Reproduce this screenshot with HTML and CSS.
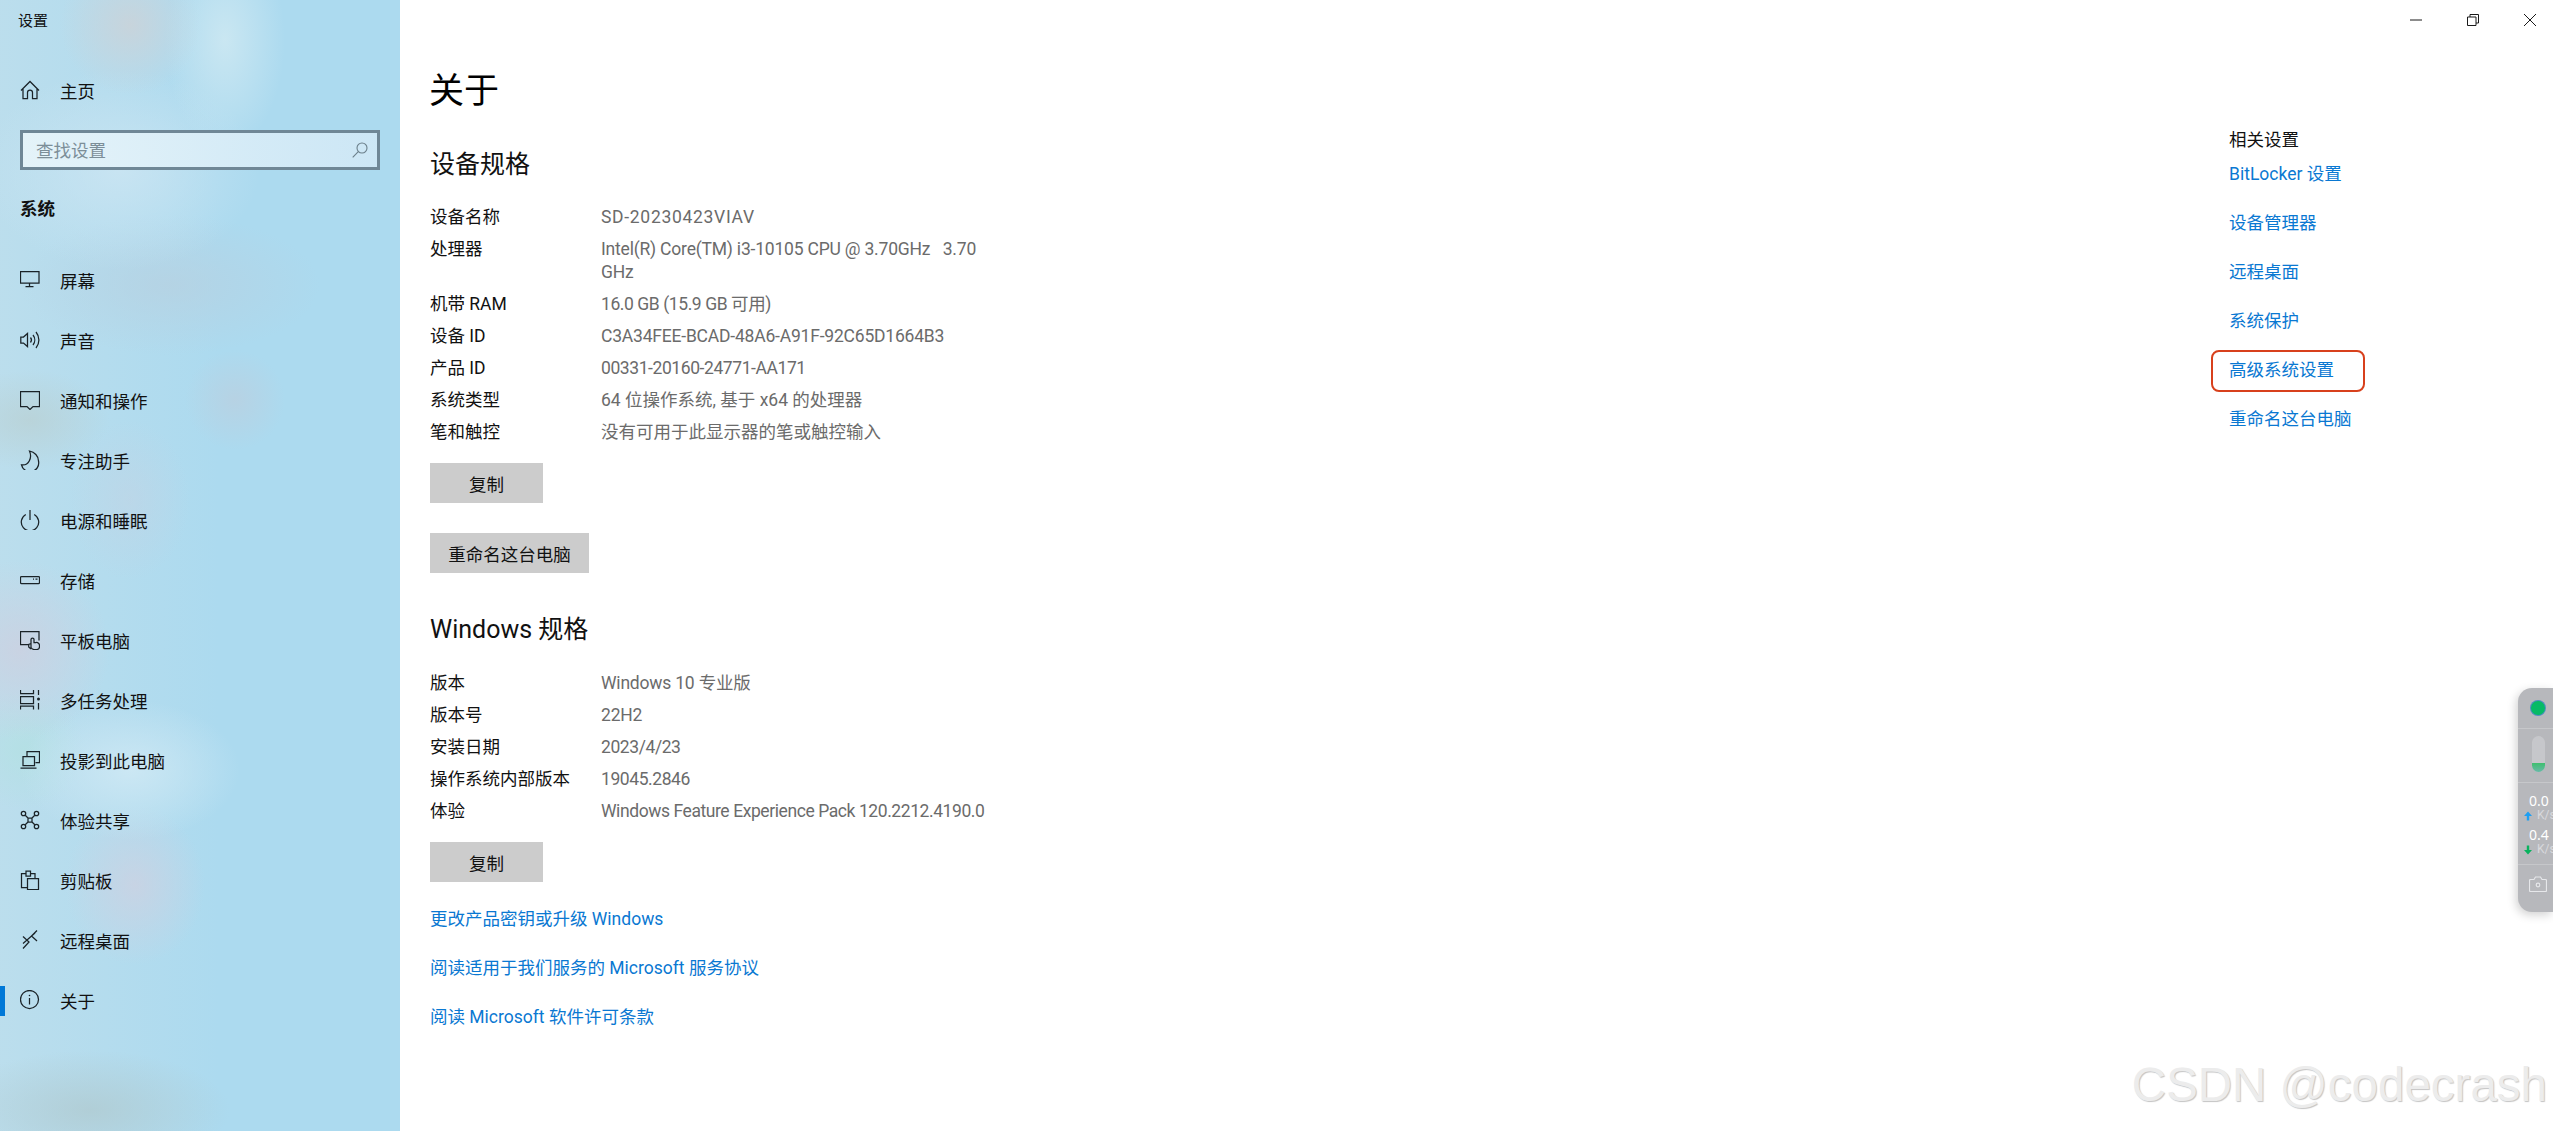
FILE: index.html
```html
<!DOCTYPE html>
<html lang="zh-CN">
<head>
<meta charset="utf-8">
<title>设置</title>
<link rel="stylesheet" href="styles.css">
</head>
<body>
<div class="app">
  <aside class="sidebar">
    <div class="app-title">设置</div>
    <a class="nav-item"><svg class="ico" viewBox="0 0 20 20"><path d="M1 10.500 10 1.500l9 9M3 8.500V18.500h4.500v-6a2.500 2.500 0 0 1 5 0v6H17V8.500"/></svg><span>主页</span></a>
    <div class="search"><span class="search-text">查找设置</span><svg class="search-ico" viewBox="0 0 16 16"><circle cx="10" cy="6" r="5"/><path d="M6.300 9.700.7 15.300"/></svg></div>
    <div class="group">系统</div>
    <nav class="nav">
      <a class="nav-item"><svg class="ico" viewBox="0 0 20 20"><path d="M.5 1.500h18.500v11.500H.5zM9.500 13v3M5.500 16.500h8"/></svg><span>屏幕</span></a>
      <a class="nav-item"><svg class="ico" viewBox="0 0 20 20"><path d="M.8 7h2.700L7.500 3.500v13L3.500 13H.8zM10.500 7.500a4 4 0 0 1 0 5M13 5a8 8 0 0 1 0 10M16 2a12.500 12.500 0 0 1 0 16"/></svg><span>声音</span></a>
      <a class="nav-item"><svg class="ico" viewBox="0 0 20 20"><path d="M.5 1.500h19v15H13L10 19.500 7 16.500H.5z"/></svg><span>通知和操作</span></a>
      <a class="nav-item"><svg class="ico" viewBox="0 0 20 20"><path d="M9.500 1C14.500 2 18.500 6 18.500 11a8.500 8.500 0 0 1-17 3.800C8.500 16 12.500 8 9.500 1z"/></svg><span>专注助手</span></a>
      <a class="nav-item"><svg class="ico" viewBox="0 0 20 20"><path d="M10 0v10M5.800 4.500a8.700 8.700 0 1 0 8.400 0"/></svg><span>电源和睡眠</span></a>
      <a class="nav-item"><svg class="ico" viewBox="0 0 20 20"><rect x=".5" y="6.500" width="19" height="7" rx="1"/><path d="M13 9.200h1M15.500 9.200h2"/></svg><span>存储</span></a>
      <a class="nav-item"><svg class="ico" viewBox="0 0 20 20"><path d="M8.500 14.500H.5v-13h18.500v9M11 17.500V9.500a1.500 1.500 0 0 1 3 0v3h2a3 3 0 0 1 3.500 3v1.500a2.800 2.800 0 0 1-2.800 2.500h-2.700A4 4 0 0 1 11 17.500zM11 13.500l-2.300 1v2.500l2.300 2"/></svg><span>平板电脑</span></a>
      <a class="nav-item"><svg class="ico" viewBox="0 0 20 20"><path d="M.5 0v3.500h13V0M.5 6.500h13v7H.5zM.5 19.500V16h13v3.500M18.500 0v5M18.500 13v6.500"/><circle class="solid" cx="18.500" cy="9" r="1.500"/></svg><span>多任务处理</span></a>
      <a class="nav-item"><svg class="ico" viewBox="0 0 20 20"><path d="M7 6V1.500h12.500v11H15.500M3 6.500h11.500v9H3zM.5 18h16"/></svg><span>投影到此电脑</span></a>
      <a class="nav-item"><svg class="ico" viewBox="0 0 20 20"><circle cx="3.500" cy="3.500" r="2.200"/><circle cx="16.500" cy="3.500" r="2.200"/><circle cx="3.500" cy="16.500" r="2.200"/><circle cx="16.500" cy="16.500" r="2.200"/><path d="M5.200 5.200 8 8m6.800-2.800L12 8M5.200 14.800 8 12m6.800 2.800L12 12M8 8h4v4H8z"/></svg><span>体验共享</span></a>
      <a class="nav-item"><svg class="ico" viewBox="0 0 20 20"><path d="M7 17.500H1.500v-14H6V1h4.500v2.500H15V8M7.500 8.500h11v11h-11zM6 3.500V6h4.500V3.500"/></svg><span>剪贴板</span></a>
      <a class="nav-item"><svg class="ico" viewBox="0 0 20 20"><path d="M3 6.500 9 12l-6 6.500M17 .5l-5.500 5.500 5.500 5M3 13.500 15 3"/></svg><span>远程桌面</span></a>
      <a class="nav-item active"><svg class="ico" viewBox="0 0 20 20"><circle cx="9.500" cy="9.500" r="9"/><path d="M9.500 8v6.500"/><circle class="solid" cx="9.500" cy="5.500" r=".8"/></svg><span>关于</span></a>
    </nav>
  </aside>

  <main class="main">
    <div class="win-controls">
      <svg class="win-btn" viewBox="0 0 12 12"><path d="M0 6h12"/></svg>
      <svg class="win-btn" viewBox="0 0 12 12"><path d="M.5 3h8.500v8.500H.5zM3 3V.5h8.500V9H9"/></svg>
      <svg class="win-btn" viewBox="0 0 12 12"><path d="M0 0l12 12M12 0 0 12"/></svg>
    </div>
    <section class="content">
      <h1 class="page-title">关于</h1>
      <h2 class="section-title">设备规格</h2>
      <dl class="spec">
        <dt>设备名称</dt><dd class="wide">SD-20230423VIAV</dd>
        <dt>处理器</dt><dd class="latin">Intel(R) Core(TM) i3-10105 CPU @ 3.70GHz&nbsp;&nbsp;&nbsp;3.70 GHz</dd>
        <dt>机带 RAM</dt><dd class="digits">16.0 GB (15.9 GB 可用)</dd>
        <dt>设备 ID</dt><dd class="latin">C3A34FEE-BCAD-48A6-A91F-92C65D1664B3</dd>
        <dt>产品 ID</dt><dd class="digits">00331-20160-24771-AA171</dd>
        <dt>系统类型</dt><dd>64 位操作系统, 基于 x64 的处理器</dd>
        <dt>笔和触控</dt><dd>没有可用于此显示器的笔或触控输入</dd>
      </dl>
      <button class="btn btn-copy">复制</button>
      <button class="btn btn-rename">重命名这台电脑</button>
      <h2 class="section-title second">Windows 规格</h2>
      <dl class="spec spec-win">
        <dt>版本</dt><dd class="latin">Windows 10 专业版</dd>
        <dt>版本号</dt><dd class="latin">22H2</dd>
        <dt>安装日期</dt><dd class="digits">2023/4/23</dd>
        <dt>操作系统内部版本</dt><dd class="digits">19045.2846</dd>
        <dt>体验</dt><dd class="digits">Windows Feature Experience Pack 120.2212.4190.0</dd>
      </dl>
      <button class="btn btn-copy">复制</button>
      <div class="links">
        <a class="link">更改产品密钥或升级 Windows</a>
        <a class="link">阅读适用于我们服务的 Microsoft 服务协议</a>
        <a class="link">阅读 Microsoft 软件许可条款</a>
      </div>
    </section>
    <aside class="related">
      <div class="related-title">相关设置</div>
      <a class="link">BitLocker 设置</a>
      <a class="link">设备管理器</a>
      <a class="link">远程桌面</a>
      <a class="link">系统保护</a>
      <a class="link marked">高级系统设置</a>
      <a class="link">重命名这台电脑</a>
    </aside>
  </main>
</div>

<div class="widget">
  <div class="w-top"><span class="w-dot"></span></div>
  <div class="w-mem"><span class="w-capsule"><span class="w-fill"></span></span></div>
  <div class="w-net">
    <div class="w-val">0.0</div>
    <div class="w-rate"><svg class="w-arrow" viewBox="0 0 8 9"><path class="up" d="M4 0 8 4.500H5.200V9H2.800V4.500H0z"/></svg>K/s</div>
    <div class="w-val w-val2">0.4</div>
    <div class="w-rate"><svg class="w-arrow" viewBox="0 0 8 9"><path class="down" d="M4 9 8 4.500H5.200V0H2.800V4.500H0z"/></svg>K/s</div>
  </div>
  <div class="w-cam"><svg viewBox="0 0 18 16"><path d="M1.500 3.500h3.500L6.500 1h5L13 3.500h3.500a1 1 0 0 1 1 1v10a1 1 0 0 1-1 1h-15a1 1 0 0 1-1-1v-10a1 1 0 0 1 1-1z"/><circle cx="9" cy="9" r="1.800"/></svg></div>
</div>
<div class="watermark">CSDN @codecrash</div>
</body>
</html>
```

FILE: styles.css
```css
* { box-sizing: border-box; }
html, body { margin: 0; height: 100%; overflow: hidden; }
body {
  background: #fff;
  color: #111;
  font-family: Roboto, "Noto Sans CJK SC", sans-serif;
  font-size: 17.5px;
}
.app { display: flex; height: 1131px; }

.sidebar {
  width: 400px;
  flex: none;
  background-color: #acdaef;
  background-image:
    radial-gradient(ellipse 70px 70px at 130px 25px, rgba(205,210,215,.8), transparent),
    radial-gradient(ellipse 60px 110px at 225px 40px, rgba(205,232,242,.9), transparent),
    radial-gradient(ellipse 140px 100px at 120px 170px, rgba(205,230,243,.8), transparent),
    radial-gradient(ellipse 150px 70px at 170px 285px, rgba(183,208,224,.7), transparent),
    radial-gradient(ellipse 50px 50px at 235px 400px, rgba(190,205,220,.6), transparent),
    radial-gradient(ellipse 80px 50px at 30px 420px, rgba(185,205,205,.6), transparent),
    radial-gradient(ellipse 60px 80px at 130px 500px, rgba(200,208,224,.4), transparent),
    radial-gradient(ellipse 90px 90px at 20px 650px, rgba(205,208,224,.8), transparent),
    radial-gradient(ellipse 110px 70px at 130px 770px, rgba(205,232,244,.95), transparent),
    radial-gradient(ellipse 60px 60px at 25px 750px, rgba(178,225,225,.7), transparent),
    radial-gradient(ellipse 70px 80px at 135px 885px, rgba(208,208,224,.7), transparent),
    radial-gradient(ellipse 140px 60px at 90px 1110px, rgba(175,200,205,.7), transparent),
    linear-gradient(90deg, rgba(200,225,235,.55), transparent 55%);
}
.app-title { height: 40px; padding-left: 18px; font-size: 15px; line-height: 42px; }
.nav-item {
  position: relative;
  display: flex;
  align-items: center;
  gap: 20px;
  height: 60px;
  padding-left: 20px;
  line-height: 24px;
}
.nav-item span { padding-top: 1px; }
.app-title + .nav-item { margin-top: 21px; margin-bottom: 9px; }
.ico {
  width: 20px;
  height: 20px;
  flex: none;
  margin-top: -2px;
  fill: none;
  stroke: #1a2328;
  stroke-width: 1.250;
}
.ico .solid { fill: #1a2328; stroke: none; }
.search {
  display: flex;
  align-items: center;
  justify-content: space-between;
  height: 40px;
  margin: 0 20px;
  padding: 0 9px 0 13px;
  border: 3px solid #6f8796;
  background: linear-gradient(90deg, rgba(232,245,250,.9), rgba(208,232,246,.9));
  color: #7c8e98;
}
.search-text { margin-top: -2px; }
.search-ico { width: 16px; height: 16px; fill: none; stroke: #6b7f8a; stroke-width: 1.100; }
.group { height: 81px; padding: 26px 0 0 20px; font-weight: 700; line-height: 26px; }
.active::before {
  content: "";
  position: absolute;
  left: 0;
  top: 15px;
  width: 5px;
  height: 30px;
  background: #0078d7;
}

.main { position: relative; flex: 1; display: flex; justify-content: space-between; }
.win-controls {
  position: absolute;
  top: 14px;
  right: 17px;
  display: flex;
  gap: 45px;
}
.win-btn { width: 12px; height: 12px; fill: none; stroke: #1a1a1a; stroke-width: 1; }
.content { width: 620px; padding: 67px 0 0 30px; }
.page-title { margin: 0 0 31px -1px; font-size: 35px; font-weight: 400; line-height: 50px; color: #000; }
.section-title { margin: 0 0 19px; font-size: 25px; font-weight: 400; line-height: 34px; color: #111; }
.section-title.second { margin-top: 40px; margin-bottom: 20px; }
.spec {
  display: grid;
  grid-template-columns: 171px 408px;
  margin: 0 0 15px;
  line-height: 23px;
}
.spec-win { margin-bottom: 15px; }
.spec dt, .spec dd { margin: 0; padding: 4.500px 0; }
.spec dd { color: #6b6b6b; }
.spec .latin { letter-spacing: -.2px; }
.spec .digits { letter-spacing: -.42px; }
.spec .wide { letter-spacing: .7px; }
.btn {
  display: block;
  height: 40px;
  border: 0;
  padding: 0;
  background: #ccc;
  color: #111;
  font: inherit;
}
.btn-copy { width: 113px; }
.btn-rename { width: 159px; margin-top: 30px; }
.links { display: flex; flex-direction: column; align-items: flex-start; margin-top: 23.500px; }
.link { display: block; height: 49px; line-height: 26px; color: #0a78d2; }
.related { width: 324px; padding-top: 126.500px; }
.related-title { height: 34px; line-height: 26px; color: #111; }
.related .link { position: relative; height: 49px; line-height: 26px; }
.marked::after {
  content: "";
  position: absolute;
  left: -18px;
  top: -7px;
  width: 150px;
  height: 38px;
  border: 2.500px solid #d8401c;
  border-radius: 8px;
}

.widget {
  position: absolute;
  top: 688px;
  right: 0;
  width: 35px;
  height: 224px;
  border-radius: 14px 0 0 14px;
  background: #b7b8bc;
  box-shadow: -2px 3px 10px rgba(0,0,0,.18);
  color: #fff;
  overflow: hidden;
}
.w-top { height: 41px; padding: 13px 0 0 13px; border-bottom: 1px solid #c6c7ca; }
.w-dot { display: block; width: 14px; height: 14px; border-radius: 50%; background: #07ba66; box-shadow: 0 0 0 1px #4f8fc0; }
.w-mem { height: 54px; padding: 7px 0 0 14px; border-bottom: 1px solid #c6c7ca; }
.w-capsule { display: block; position: relative; width: 13px; height: 36px; border-radius: 7px; background: #c6c7cb; overflow: hidden; }
.w-fill { position: absolute; left: 0; right: 0; bottom: 0; height: 9px; background: linear-gradient(#3fbf6f, #68b9a8); }
.w-net { height: 82px; padding: 9px 0 0 11px; border-bottom: 1px solid #c6c7ca; }
.w-val { font-family: "Noto Sans", sans-serif; font-size: 14px; line-height: 17px; }
.w-val2 { margin-top: 4px; }
.w-rate { display: flex; align-items: center; gap: 5px; margin-left: -5px; font-size: 12px; line-height: 13px; white-space: nowrap; color: #d8d9dc; }
.w-arrow { width: 8px; height: 10px; flex: none; }
.w-arrow .up { fill: #1e9ff2; }
.w-arrow .down { fill: #09b35e; }
.w-cam { padding: 11px 0 0 11px; }
.w-cam svg { display: block; width: 18px; height: 16px; fill: none; stroke: #e6e7ea; stroke-width: 1.200; }

.watermark {
  position: absolute;
  right: 6px;
  bottom: 19px;
  font-family: "Liberation Sans", sans-serif;
  font-size: 47.500px;
  line-height: 54px;
  color: #ececec;
  text-shadow: 1px 1px 1px #c4c4c4;
  white-space: nowrap;
}
```
